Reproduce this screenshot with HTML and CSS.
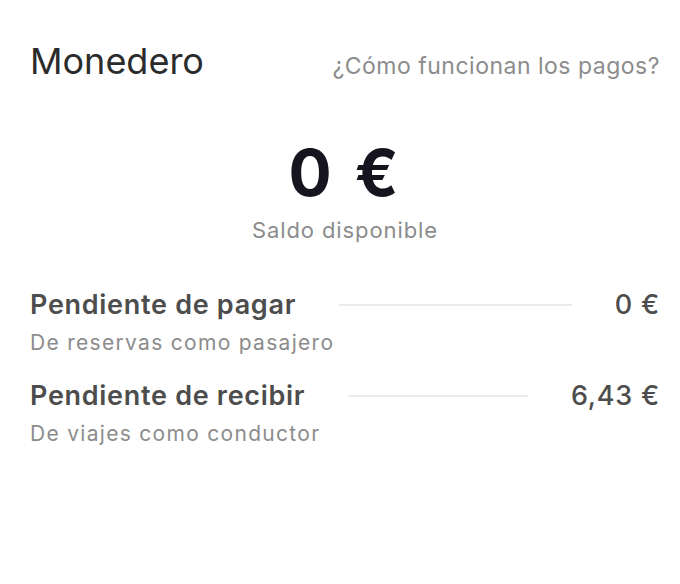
FILE: index.html
```html
<!DOCTYPE html>
<html lang="es">
<head>
<meta charset="utf-8">
<link rel="stylesheet" href="styles.css">
</head>
<body>
<main class="wallet">
  <header class="wallet-header">
    <h1 class="title">Monedero</h1>
    <a class="help" href="#">¿Cómo funcionan los pagos?</a>
  </header>
  <section class="balance">
    <div class="amount">0 €</div>
    <div class="balance-label">Saldo disponible</div>
  </section>
  <section class="rows">
    <div class="row">
      <div class="row-top">
        <span class="row-title">Pendiente de pagar</span>
        <span class="rule"></span>
        <span class="row-value">0 €</span>
      </div>
      <div class="row-sub">De reservas como pasajero</div>
    </div>
    <div class="row">
      <div class="row-top">
        <span class="row-title">Pendiente de recibir</span>
        <span class="rule"></span>
        <span class="row-value">6,43 €</span>
      </div>
      <div class="row-sub">De viajes como conductor</div>
    </div>
  </section>
</main>
</body>
</html>
```
FILE: styles.css
```css
html, body {
  margin: 0;
  padding: 0;
  background: #ffffff;
}
body {
  font-family: "Inter", "Noto Sans", sans-serif;
  width: 680px;
  height: 584px;
}
.wallet {
  padding: 39px 20px 0 30px;
}
.wallet-header {
  display: flex;
  justify-content: space-between;
  align-items: baseline;
}
.title {
  margin: 0;
  font-size: 36px;
  font-weight: 400;
  color: #2b2b2b;
  line-height: normal;
}
.help {
  font-size: 23px;
  color: #8c8c8c;
  text-decoration: none;
  letter-spacing: 0.5px;
}
.balance {
  display: flex;
  flex-direction: column;
  align-items: center;
  margin-top: 55px;
}
.amount {
  font-size: 64px;
  font-weight: 700;
  color: #15141f;
  line-height: 1.1;
  letter-spacing: 3px;
  word-spacing: 2px;
}
.balance-label {
  margin-top: 9px;
  font-size: 22px;
  color: #8c8c8c;
  letter-spacing: 0.9px;
}
.rows {
  margin-top: 45px;
  display: flex;
  flex-direction: column;
  gap: 24px;
}
.row-top {
  display: flex;
  align-items: center;
  gap: 43px;
}
.row-title {
  font-size: 27px;
  font-weight: 600;
  color: #4d4d4d;
  letter-spacing: 0.7px;
}
.rule {
  flex: 1;
  height: 2px;
  background: #ebebeb;
}
.row-value {
  font-size: 27px;
  font-weight: 500;
  color: #4d4d4d;
  letter-spacing: 0.8px;
}
.row-sub {
  margin-top: 9px;
  font-size: 21px;
  color: #8c8c8c;
  letter-spacing: 1.3px;
}
```
